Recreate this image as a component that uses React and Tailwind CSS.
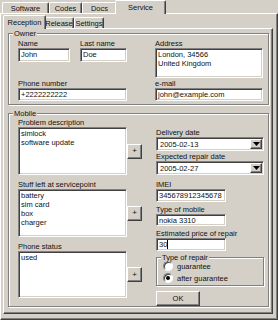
import React from 'react';

// Windows-classic style bevels
const sunken =
  'bg-white border border-t-[#808080] border-l-[#808080] border-b-white border-r-white shadow-[inset_1px_1px_0_#404040,inset_-1px_-1px_0_#d4d0c8]';
const raised =
  'bg-[#d4d0c8] border border-t-white border-l-white border-b-[#404040] border-r-[#404040] shadow-[inset_-1px_-1px_0_#808080]';
const etched = 'relative border border-[#808080] shadow-[inset_1px_1px_0_#fff,1px_1px_0_#fff]';

function Tab({ label, className, active }) {
  if (active) {
    // active tab is 2px wider on each side than its slot
    return (
      <div
        className={`relative z-10 -mx-[2px] -mb-px h-[14px] bg-[#d4d0c8] border-l border-t border-r border-l-white border-t-white border-r-[#404040] rounded-t-[2px] shadow-[inset_-1px_0_0_#808080] flex justify-center pt-[2px] whitespace-nowrap ${className}`}
      >
        {label}
      </div>
    );
  }
  return (
    <div
      className={`h-[11px] border-l border-t border-r border-l-white border-t-white border-r-[#404040] rounded-t-[2px] shadow-[inset_-1px_0_0_#808080] flex justify-center pt-[1px] whitespace-nowrap ${className}`}
    >
      {label}
    </div>
  );
}

function Label({ children, className = '' }) {
  return <div className={`h-[9px] leading-[9px] whitespace-nowrap ${className}`}>{children}</div>;
}

function Field({ children, className = '' }) {
  return <div className={`${sunken} px-[2px] pt-[1px] leading-[9px] whitespace-nowrap overflow-hidden ${className}`}>{children}</div>;
}

function Combo({ value }) {
  return (
    <div className={`${sunken} h-[14px] w-[108px] flex items-stretch justify-between p-[1px]`}>
      <span className="pl-[2px] pt-[1px] leading-[9px]">{value}</span>
      <div className={`${raised} w-[12px] flex items-center justify-center`}>
        <svg width="7" height="4" viewBox="0 0 7 4">
          <path d="M0 0h7L3.5 4z" fill="#000" />
        </svg>
      </div>
    </div>
  );
}

function PlusButton() {
  return (
    <div className={`${raised} w-[15px] h-[15px] flex items-center justify-center leading-none text-[8px]`}>+</div>
  );
}

function ListRow({ items, h }) {
  return (
    <div className="flex items-center">
      <Field className={`w-[109px] ${h}`}>
        {items.map((t) => (
          <div key={t}>{t}</div>
        ))}
      </Field>
      <PlusButton />
    </div>
  );
}

function Radio({ checked, label }) {
  return (
    <div className="flex items-center gap-[4px] h-[12px]">
      <span className="w-[10px] h-[10px] rounded-full bg-white border border-[#808080] border-r-white border-b-white shadow-[inset_1px_1px_0_#404040] flex items-center justify-center">
        {checked && <span className="w-[4px] h-[4px] rounded-full bg-black" />}
      </span>
      <span>{label}</span>
    </div>
  );
}

export default function App() {
  return (
    <div className="w-[278px] h-[320px] bg-[#d4d0c8] text-[#111] text-[7.5px] leading-[9px] font-['Liberation_Sans',Arial,sans-serif] flex flex-col overflow-hidden">
      {/* Outer tabs */}
      <div className="h-[13px] flex items-end pl-[2px] shrink-0">
        <Tab label="Software" className="w-[47px]" />
        <Tab label="Codes" className="w-[33px]" />
        <Tab label="Docs" className="w-[35px]" />
        <Tab label="Service" className="w-[51px]" active />
      </div>

      {/* Outer panel */}
      <div className="flex-1 flex flex-col border border-t-white border-l-white border-r-[#404040] border-b-[#404040] shadow-[inset_-1px_-1px_0_#808080] pt-[1px] pl-[2px] pr-[4px] pb-[5px]">
        {/* Inner tabs */}
        <div className="h-[13px] flex items-end pl-[2px] shrink-0">
          <Tab label="Reception" className="w-[43px]" active />
          <Tab label="Release" className="w-[30px]" />
          <Tab label="Settings" className="w-[30px]" />
        </div>

        {/* Inner panel */}
        <div className="flex-1 border border-t-white border-l-white border-r-[#404040] border-b-[#404040] shadow-[inset_-1px_-1px_0_#808080] pl-[4px] pt-[4px]">
          {/* Owner */}
          <div className={`${etched} w-[261px] h-[72px] pl-[9px] pt-[5px] flex gap-[28px]`}>
            <span className="absolute -top-[5px] left-[4px] px-[1px] bg-[#d4d0c8] leading-[9px]">Owner</span>
            <div className="w-[109px] flex flex-col">
              <div className="flex gap-[10px]">
                <div>
                  <Label>Name</Label>
                  <Field className="w-[52px] h-[14px]">John</Field>
                </div>
                <div>
                  <Label>Last name</Label>
                  <Field className="w-[47px] h-[14px]">Doe</Field>
                </div>
              </div>
              <Label className="mt-[17px]">Phone number</Label>
              <Field className="w-[109px] h-[13px]">+2222222222</Field>
            </div>
            <div className="w-[108px] flex flex-col">
              <Label>Address</Label>
              <Field className="w-[108px] h-[30px]">
                <div>London, 34566</div>
                <div>United Kingdom</div>
              </Field>
              <Label className="mt-[1px]">e-mail</Label>
              <Field className="w-[108px] h-[13px]">john@example.com</Field>
            </div>
          </div>

          {/* Mobile */}
          <div className={`${etched} mt-[8px] w-[261px] h-[194px] pl-[9px] pt-[4px] flex gap-[14px]`}>
            <span className="absolute -top-[5px] left-[4px] px-[1px] bg-[#d4d0c8] leading-[9px]">Mobile</span>
            <div className="flex flex-col">
              <Label>Problem description</Label>
              <ListRow items={['simlock', 'software update']} h="h-[48px]" />
              <Label className="mt-[5px]">Stuff left at servicepoint</Label>
              <ListRow items={['battery', 'sim card', 'box', 'charger']} h="h-[48px]" />
              <Label className="mt-[5px]">Phone status</Label>
              <ListRow items={['used']} h="h-[47px]" />
            </div>

            <div className="flex flex-col pt-[10px]">
              <Label>Delivery date</Label>
              <Combo value="2005-02-13" />
              <Label className="mt-[1px]">Expected repair date</Label>
              <Combo value="2005-02-27" />
              <Label className="mt-[5px]">IMEI</Label>
              <Field className="w-[70px] h-[13px]">345678912345678</Field>
              <Label className="mt-[3px]">Type of mobile</Label>
              <Field className="w-[70px] h-[13px]">nokia 3310</Field>
              <Label className="mt-[3px]">Estimated price of repair</Label>
              <Field className="w-[70px] h-[13px] flex items-start">
                <span>30</span>
                <span className="w-px h-[9px] bg-black" />
              </Field>

              <div className={`${etched} mt-[6px] w-[108px] h-[30px] pl-[6px] pt-[2px] flex flex-col`}>
                <span className="absolute -top-[5px] left-[4px] px-[1px] bg-[#d4d0c8] leading-[9px]">Type of repair</span>
                <Radio label="guarantee" />
                <Radio label="after guarantee" checked />
              </div>

              <div className={`${raised} mt-[5px] w-[44px] h-[15px] flex items-center justify-center`}>OK</div>
            </div>
          </div>
        </div>
      </div>
    </div>
  );
}
